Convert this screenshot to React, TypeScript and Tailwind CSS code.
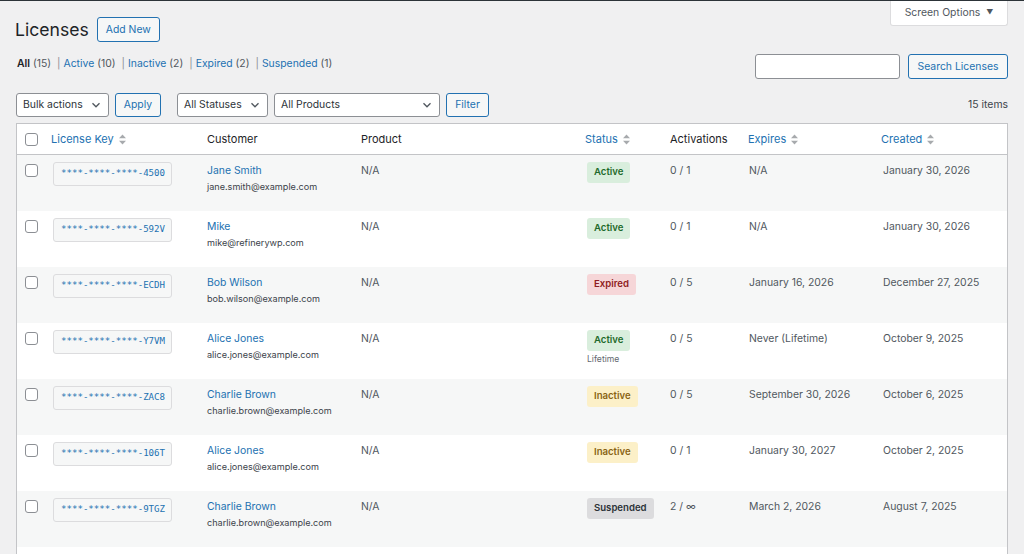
import type { ReactElement } from "react";

type Status = "Active" | "Inactive" | "Expired" | "Suspended";

type License = {
  readonly key: string;
  readonly name: string;
  readonly email: string;
  readonly status: Status;
  readonly note?: string;
  readonly activations: string;
  readonly expires: string;
  readonly created: string;
};

const LICENSES: License[] = [
  { key: "4500", name: "Jane Smith", email: "jane.smith@example.com", status: "Active", activations: "0 / 1", expires: "N/A", created: "January 30, 2026" },
  { key: "592V", name: "Mike", email: "mike@refinerywp.com", status: "Active", activations: "0 / 1", expires: "N/A", created: "January 30, 2026" },
  { key: "ECDH", name: "Bob Wilson", email: "bob.wilson@example.com", status: "Expired", activations: "0 / 5", expires: "January 16, 2026", created: "December 27, 2025" },
  { key: "Y7VM", name: "Alice Jones", email: "alice.jones@example.com", status: "Active", note: "Lifetime", activations: "0 / 5", expires: "Never (Lifetime)", created: "October 9, 2025" },
  { key: "ZAC8", name: "Charlie Brown", email: "charlie.brown@example.com", status: "Inactive", activations: "0 / 5", expires: "September 30, 2026", created: "October 6, 2025" },
  { key: "106T", name: "Alice Jones", email: "alice.jones@example.com", status: "Inactive", activations: "0 / 1", expires: "January 30, 2027", created: "October 2, 2025" },
  { key: "9TGZ", name: "Charlie Brown", email: "charlie.brown@example.com", status: "Suspended", activations: "2 / ∞", expires: "March 2, 2026", created: "August 7, 2025" },
  { key: "K3PD", name: "Bob Wilson", email: "bob.wilson@example.com", status: "Expired", activations: "1 / 3", expires: "July 12, 2025", created: "July 12, 2024" },
];

const BADGE: Record<Status, string> = {
  Active: "bg-[#d9eedd] text-[#1f6a2b]",
  Inactive: "bg-[#fcf0c8] text-[#8a6414]",
  Expired: "bg-[#f6d6d8] text-[#8f1d22]",
  Suspended: "bg-[#dcdcde] text-[#2c3338]",
};

const FILTERS = [
  { label: "Active", count: 10 },
  { label: "Inactive", count: 2 },
  { label: "Expired", count: 2 },
  { label: "Suspended", count: 1 },
];

const GRID =
  "grid grid-cols-[26px_156px_154px_224px_85px_78px_133px_134px]";

function SortIcon(): ReactElement {
  return (
    <svg width="7" height="11" viewBox="0 0 7 11" className="ml-[5px]" aria-hidden>
      <path d="M0 4.2 3.5 0.5 7 4.2Z" fill="#a7aaad" />
      <path d="M0 6.8 3.5 10.5 7 6.8Z" fill="#a7aaad" />
    </svg>
  );
}

function Chevron(): ReactElement {
  return (
    <svg width="10" height="10" viewBox="0 0 10 10" aria-hidden>
      <path d="M1.5 3.2 5 6.8 8.5 3.2" fill="none" stroke="#50575e" strokeWidth="1.3" />
    </svg>
  );
}

function Checkbox(): ReactElement {
  return (
    <span className="block h-[13px] w-[13px] rounded-[3px] border border-[#8c8f94] bg-white" />
  );
}

function Select({ label, width }: { label: string; width: string }): ReactElement {
  return (
    <div
      className={`flex h-[24px] ${width} items-center justify-between rounded-[3px] border border-[#8c8f94] bg-white pl-[6px] pr-[7px] text-[#2c3338]`}
    >
      <span>{label}</span>
      <Chevron />
    </div>
  );
}

function Button({ label, width }: { label: string; width: string }): ReactElement {
  return (
    <button
      type="button"
      className={`flex h-[24px] ${width} items-center justify-center rounded-[3px] border border-[#2271b1] bg-[#f6f7f7] text-[#2271b1]`}
    >
      {label}
    </button>
  );
}

function HeaderCell({ label, sortable }: { label: string; sortable?: boolean }): ReactElement {
  return (
    <div className="flex items-center pl-[8px]">
      <span className={sortable ? "text-[#2271b1]" : "text-[#1d2327]"}>{label}</span>
      {sortable && <SortIcon />}
    </div>
  );
}

function Row({ lic, odd }: { lic: License; odd: boolean }): ReactElement {
  return (
    <div className={`${GRID} h-[56px] ${odd ? "bg-[#f6f7f7]" : "bg-white"}`}>
      <div className="pl-[8px] pt-[9px]">
        <Checkbox />
      </div>
      <div className="pl-[10px] pt-[7px]">
        <div className="flex h-[24px] w-[119px] items-center rounded-[3px] border border-[#dcdcde] bg-[#f6f7f7] pl-[7px] font-['DejaVu_Sans_Mono',monospace] text-[9.1px] text-[#2271b1]">
          ****-****-****-{lic.key}
        </div>
      </div>
      <div className="pl-[8px] pt-[8px] leading-[16px]">
        <div className="text-[#2271b1]">{lic.name}</div>
        <div className="text-[9.1px] text-[#3c434a]">{lic.email}</div>
      </div>
      <div className="pl-[8px] pt-[8px] leading-[16px] text-[#50575e]">N/A</div>
      <div className="pl-[10px] pt-[7px]">
        <span
          className={`inline-flex h-[21px] items-center rounded-[3px] px-[7px] text-[9.6px] font-semibold ${BADGE[lic.status]}`}
        >
          {lic.status}
        </span>
        {lic.note && (
          <div className="mt-px text-[8.6px] leading-[14px] text-[#646970]">{lic.note}</div>
        )}
      </div>
      <div className="pl-[8px] pt-[8px] leading-[16px] text-[#50575e]">{lic.activations}</div>
      <div className="pl-[9px] pt-[8px] leading-[16px] text-[#50575e]">{lic.expires}</div>
      <div className="pl-[10px] pt-[8px] leading-[16px] text-[#50575e]">{lic.created}</div>
    </div>
  );
}

export default function App(): ReactElement {
  return (
    <div className="min-h-screen overflow-hidden bg-[#f0f0f1] font-['Inter',sans-serif] text-[10.4px] text-[#3c434a]">
      <div className="h-px bg-[#2c3338]" />
      <div className="px-4">
        <div className="flex items-start justify-between">
          <div className="-ml-px flex items-center gap-[8px] pt-[16px]">
            <h1 className="text-[17.6px] leading-[24px] text-[#1d2327]">Licenses</h1>
            <Button label="Add New" width="w-[63px] h-[25px]" />
          </div>
          <div className="flex h-[25px] w-[118px] items-center justify-center gap-[6px] rounded-b-[3px] border border-t-0 border-[#dcdcde] bg-white text-[#50575e]">
            <span>Screen Options</span>
            <span className="text-[7px]">▼</span>
          </div>
        </div>

        <div className="mt-[12px] flex items-start justify-between">
          <div className="flex pt-[2px] leading-[16px] text-[#50575e]">
            <span className="pl-px">
              <span className="font-semibold text-[#1d2327]">All</span> (15)
            </span>
            {FILTERS.map((f) => (
              <span key={f.label}>
                <span className="ml-[6px] mr-[3px] text-[#8c8f94]">|</span>
                <span className="text-[#2271b1]">{f.label}</span> ({f.count})
              </span>
            ))}
          </div>
          <div className="flex items-center gap-[8px]">
            <div className="h-[25px] w-[145px] rounded-[3px] border border-[#8c8f94] bg-white" />
            <Button label="Search Licenses" width="w-[100px] h-[25px]" />
          </div>
        </div>

        <div className="mt-[14px] flex items-center justify-between">
          <div className="flex items-center">
            <Select label="Bulk actions" width="w-[93px]" />
            <div className="ml-[6px]">
              <Button label="Apply" width="w-[46px]" />
            </div>
            <div className="ml-[16px]">
              <Select label="All Statuses" width="w-[91px]" />
            </div>
            <div className="ml-[6px]">
              <Select label="All Products" width="w-[166px]" />
            </div>
            <div className="ml-[6px]">
              <Button label="Filter" width="w-[43px]" />
            </div>
          </div>
          <span className="text-[#3c434a]">15 items</span>
        </div>

        <div className="mt-[6px] border border-[#c3c4c7] bg-white">
          <div className={`${GRID} h-[31px] border-b border-[#c3c4c7] text-[11px]`}>
            <div className="flex items-center pl-[8px]">
              <Checkbox />
            </div>
            <HeaderCell label="License Key" sortable />
            <HeaderCell label="Customer" />
            <HeaderCell label="Product" />
            <HeaderCell label="Status" sortable />
            <HeaderCell label="Activations" />
            <HeaderCell label="Expires" sortable />
            <HeaderCell label="Created" sortable />
          </div>
          {LICENSES.map((lic, i) => (
            <Row key={lic.key} lic={lic} odd={i % 2 === 0} />
          ))}
        </div>
      </div>
    </div>
  );
}
